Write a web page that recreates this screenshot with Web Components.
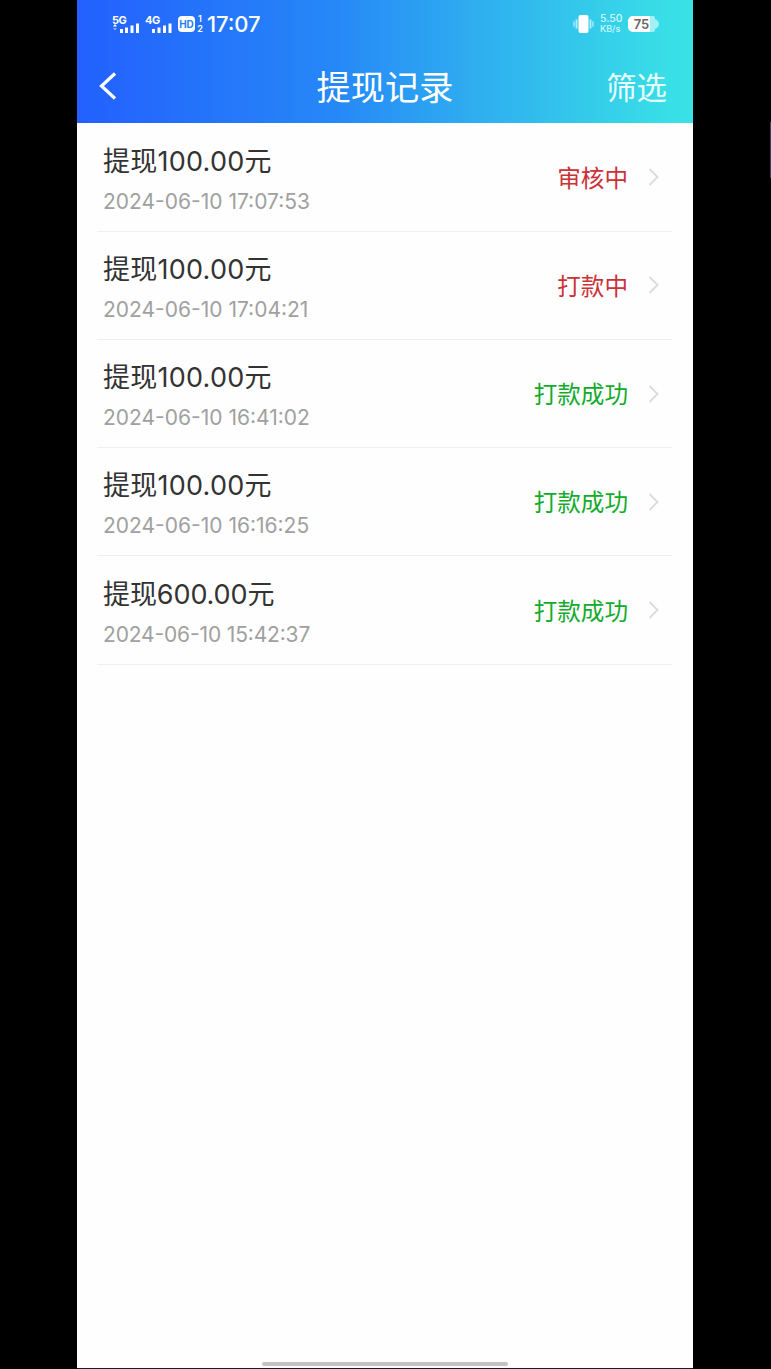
<!DOCTYPE html>
<html lang="zh-CN">
<head>
<meta charset="utf-8">
<title>提现记录</title>
<style>
    body {
        margin: 0;
        height: 1369px;
        background: #000;
        overflow: hidden;
        font-family: Inter, "Noto Sans CJK SC", sans-serif;
    }
</style>
</head>
<body>
<phone-screen>
    <app-header slot="header" heading="提现记录" action="筛选">
        <status-bar time="17:07" speed="5.50" battery="75"></status-bar>
    </app-header>
    <record-item time="2024-06-10 17:07:53" state="pending">提现100.00元<span slot="status">审核中</span></record-item>
    <record-item time="2024-06-10 17:04:21" state="pending">提现100.00元<span slot="status">打款中</span></record-item>
    <record-item time="2024-06-10 16:41:02" state="done">提现100.00元<span slot="status">打款成功</span></record-item>
    <record-item time="2024-06-10 16:16:25" state="done">提现100.00元<span slot="status">打款成功</span></record-item>
    <record-item time="2024-06-10 15:42:37" state="done" style="--amount-tracking: -.1px; --time-tracking: -.15px">提现600.00元<span slot="status">打款成功</span></record-item>
</phone-screen>

<script>
// black page with the phone column in the middle
class PhoneScreen extends HTMLElement {
    constructor() {
        super();
        this.attachShadow({mode: 'open'}).innerHTML = `
            <style>
                :host { display: grid; grid-template-columns: 77px 616px 77px 1px; height: 1369px; }
                .screen {
                    grid-column: 2;
                    display: flex;
                    flex-direction: column;
                    box-sizing: border-box;
                    height: 1369px;
                    background: #fefefe;
                    border-bottom: 1px solid #1c1b24;
                }
                .list { flex: 1; padding: .4px 21px 0 20px; }
                .home {
                    align-self: center;
                    width: 246px;
                    height: 4px;
                    margin-bottom: 2px;
                    border-radius: 2px;
                    background: #c3c3c3;
                }
                .scroll { grid-column: 4; height: 56px; margin-top: 122px; background: #44445e; }
            </style>
            <div class="screen">
                <slot name="header"></slot>
                <div class="list"><slot></slot></div>
                <div class="home"></div>
            </div>
            <div class="scroll"></div>
        `;
    }
}

class AppHeader extends HTMLElement {
    constructor() {
        super();
        this.attachShadow({mode: 'open'}).innerHTML = `
            <style>
                :host {
                    display: block;
                    height: 123px;
                    color: #fff;
                    background: linear-gradient(90deg, #2360fe 0%, #2688f7 42%, #2eabf0 63%, #38dfe7 96%, #39e2e6 100%);
                }
                .bar {
                    display: grid;
                    grid-template-columns: 1fr auto 1fr;
                    align-items: center;
                    height: 75px;
                    padding: 0 26px 0 21px;
                }
                svg { display: block; }
                .heading { font-size: 34.2px; line-height: 50px; padding: 4px 0 0 5px; }
                .action { justify-self: end; padding-top: 4px; font-size: 30.4px; line-height: 50px; color: #e9ffff; }
            </style>
            <slot></slot>
            <div class="bar">
                <svg width="20" height="30" viewBox="0 0 20 30" fill="none" stroke="#fff" stroke-width="3.200">
                    <path d="M17 2.5 3.500 15l13.500 12.500"/>
                </svg>
                <div class="heading">${this.getAttribute('heading')}</div>
                <div class="action">${this.getAttribute('action')}</div>
            </div>
        `;
    }
}

class StatusBar extends HTMLElement {
    constructor() {
        super();
        this.attachShadow({mode: 'open'}).innerHTML = `
            <style>
                :host {
                    display: flex;
                    align-items: center;
                    box-sizing: border-box;
                    height: 48px;
                    padding: 0 34px 0 35px;
                    color: #fff;
                }
                svg { display: block; flex: none; }
                .net { width: 29px; margin-right: 4px; font-size: 11px; font-weight: 700; line-height: 10px; letter-spacing: -.5px; }
                .net svg { margin-top: -2px; }
                .hd {
                    width: 17px;
                    height: 16px;
                    border-radius: 4px;
                    background: #fff;
                    color: #2b7ef9;
                    font-size: 10px;
                    font-weight: 700;
                    line-height: 16px;
                    text-align: center;
                }
                .sim { width: 8px; margin: 0 3px 0 1px; font-size: 9px; font-weight: 600; line-height: 10px; text-align: center; }
                .time { font-size: 22px; font-weight: 500; line-height: 26px; letter-spacing: -.1px; font-feature-settings: "case"; }
                .speed { margin: 0 6px 0 6px; width: 22px; font-size: 10.500px; line-height: 10px; color: #cffaff; font-weight: 500; }
                .speed div + div { font-size: 9px; }
                .battery {
                    width: 27px;
                    height: 16px;
                    border-radius: 5px 2px 2px 5px;
                    background: linear-gradient(90deg, #fff 22px, #a5f0f4 22px);
                    color: #666;
                    font-size: 13px;
                    font-weight: 600;
                    line-height: 16px;
                    text-align: center;
                }
                .gap { flex: 1; }
            </style>
            <div class="net">5G
                <svg width="29" height="10" viewBox="0 0 29 10" fill="#fff">
                    <path d="M1 3.500 3 1l2 2.500z"/><path d="M1 5h4L3 7.500z" opacity=".5"/>
                    <path d="M8 6h3v4H8zM13 4.500h3V10h-3zM18.500 2.500h3V10h-3zM24 .500h3V10h-3z"/>
                </svg>
            </div>
            <div class="net">4G
                <svg width="29" height="10" viewBox="0 0 29 10" fill="#fff">
                    <path d="M7 6h3v4H7zM12.500 4.500h3V10h-3zM18 2.500h3V10h-3zM23.500 .500h3V10h-3z"/>
                </svg>
            </div>
            <div class="hd">HD</div>
            <div class="sim"><div>1</div><div>2</div></div>
            <div class="time">${this.getAttribute('time')}</div>
            <div class="gap"></div>
            <svg width="21" height="18" viewBox="0 0 21 18">
                <rect x="5.500" y="0" width="10" height="18" rx="2" fill="#fff"/>
                <path d="M3.500 4.500v9M17.500 4.500v9" stroke="#b6f1fa" stroke-width="1.800"/>
                <path d="M1 6.500v5M20 6.500v5" stroke="#b6f1fa" stroke-width="1.300"/>
            </svg>
            <div class="speed"><div>${this.getAttribute('speed')}</div><div>KB/s</div></div>
            <div class="battery">${this.getAttribute('battery')}</div>
            <svg width="4" height="10" viewBox="0 0 4 10"><path d="M0 0q4 2 4 5t-4 5z" fill="#a5f0f4"/></svg>
        `;
    }
}

class RecordItem extends HTMLElement {
    constructor() {
        super();
        const color = this.getAttribute('state') === 'done' ? '#12ab2c' : '#cb3238';
        this.attachShadow({mode: 'open'}).innerHTML = `
            <style>
                :host {
                    display: flex;
                    align-items: center;
                    box-sizing: border-box;
                    height: 108.250px;
                    padding: 0 13px 0 6px;
                    border-bottom: 1.500px solid #f0f0f0;
                }
                .info { flex: 1; padding-top: 6px; font-feature-settings: "case"; }
                .amount { font-size: 27px; line-height: 40px; color: #333; letter-spacing: var(--amount-tracking, .25px); }
                .time { margin-top: 3px; font-size: 21px; line-height: 34px; color: #a0a0a0; letter-spacing: var(--time-tracking, 0); }
                .status { padding-top: 3px; font-size: 23.600px; line-height: 36px; color: ${color}; }
                svg { margin-left: 20px; }
            </style>
            <div class="info">
                <div class="amount"><slot></slot></div>
                <div class="time">${this.getAttribute('time')}</div>
            </div>
            <div class="status"><slot name="status"></slot></div>
            <svg width="11" height="18" viewBox="0 0 11 18" fill="none" stroke="#dcdcdc" stroke-width="1.900">
                <path d="M1.500 1 9.500 9l-8 8"/>
            </svg>
        `;
    }
}

customElements.define('phone-screen', PhoneScreen);
customElements.define('app-header', AppHeader);
customElements.define('status-bar', StatusBar);
customElements.define('record-item', RecordItem);
</script>
</body>
</html>
